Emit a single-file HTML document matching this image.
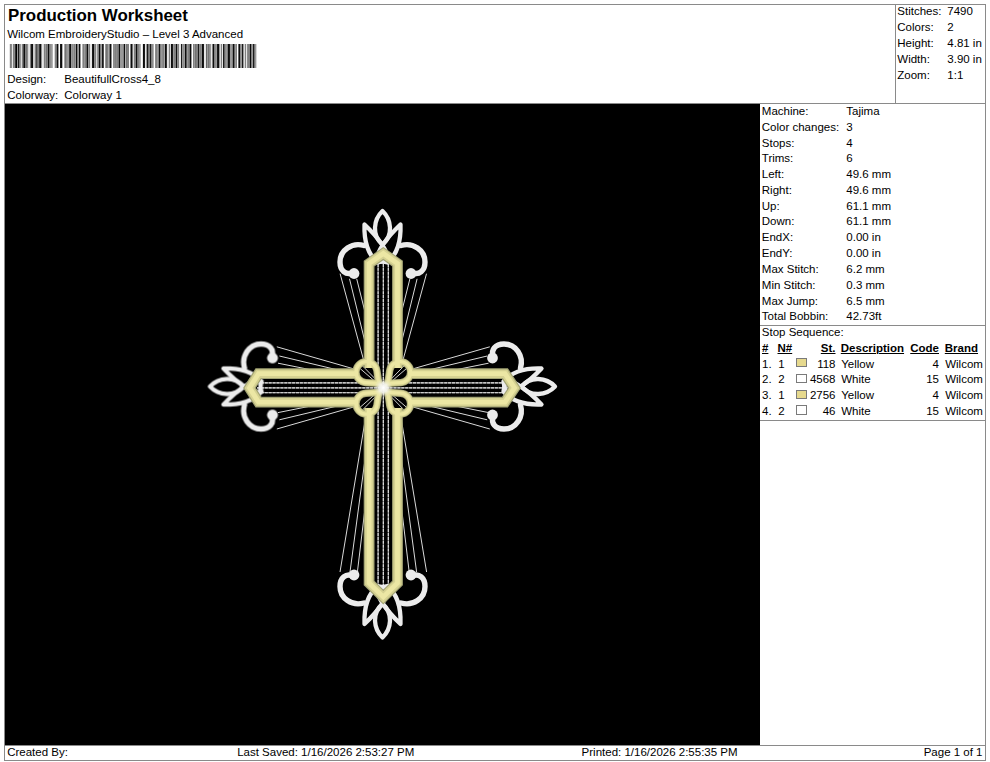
<!DOCTYPE html>
<html><head><meta charset="utf-8">
<style>
html,body{margin:0;padding:0;background:#fff;}
body{width:990px;height:762px;position:relative;overflow:hidden;font-family:"Liberation Sans",sans-serif;color:#000;}
.t{position:absolute;white-space:pre;}
.ln{position:absolute;}
.r{text-align:right;}
.u{text-decoration:underline;font-weight:bold;}
</style></head><body>
<div class="ln" style="left:4px;top:4px;width:982px;height:1px;background:#8a8a8a"></div>
<div class="ln" style="left:4px;top:4px;width:1px;height:757px;background:#8a8a8a"></div>
<div class="ln" style="left:985px;top:4px;width:1px;height:757px;background:#8a8a8a"></div>
<div class="ln" style="left:4px;top:760px;width:982px;height:1px;background:#8a8a8a"></div>
<div class="ln" style="left:4px;top:103px;width:982px;height:1px;background:#8a8a8a"></div>
<div class="ln" style="left:895px;top:4px;width:1px;height:100px;background:#8a8a8a"></div>
<div class="ln" style="left:4px;top:745px;width:982px;height:1px;background:#8a8a8a"></div>
<div class="ln" style="left:760px;top:325px;width:226px;height:1px;background:#8a8a8a"></div>
<div class="ln" style="left:760px;top:420px;width:226px;height:1px;background:#8a8a8a"></div>
<div class="t" style="left:8.00px;top:8.00px;font-size:16.9px;line-height:16.9px;font-weight:bold;">Production Worksheet</div>
<div class="t" style="left:7.20px;top:29.00px;font-size:11.5px;line-height:11.5px;">Wilcom EmbroideryStudio – Level 3 Advanced</div>
<div class="t" style="left:7.20px;top:74.00px;font-size:11.5px;line-height:11.5px;">Design:</div>
<div class="t" style="left:64.30px;top:74.00px;font-size:11.5px;line-height:11.5px;">BeautifullCross4_8</div>
<div class="t" style="left:7.20px;top:90.00px;font-size:11.5px;line-height:11.5px;">Colorway:</div>
<div class="t" style="left:64.30px;top:90.00px;font-size:11.5px;line-height:11.5px;">Colorway 1</div>
<div class="t" style="left:897.30px;top:6.00px;font-size:11.5px;line-height:11.5px;">Stitches:</div>
<div class="t" style="left:947.30px;top:6.00px;font-size:11.5px;line-height:11.5px;">7490</div>
<div class="t" style="left:897.30px;top:22.00px;font-size:11.5px;line-height:11.5px;">Colors:</div>
<div class="t" style="left:947.30px;top:22.00px;font-size:11.5px;line-height:11.5px;">2</div>
<div class="t" style="left:897.30px;top:38.00px;font-size:11.5px;line-height:11.5px;">Height:</div>
<div class="t" style="left:947.30px;top:38.00px;font-size:11.5px;line-height:11.5px;">4.81 in</div>
<div class="t" style="left:897.30px;top:54.00px;font-size:11.5px;line-height:11.5px;">Width:</div>
<div class="t" style="left:947.30px;top:54.00px;font-size:11.5px;line-height:11.5px;">3.90 in</div>
<div class="t" style="left:897.30px;top:70.00px;font-size:11.5px;line-height:11.5px;">Zoom:</div>
<div class="t" style="left:947.30px;top:70.00px;font-size:11.5px;line-height:11.5px;">1:1</div>
<svg style="position:absolute;left:0;top:0" width="990" height="110" viewBox="0 0 990 110" shape-rendering="crispEdges"><rect x="9" y="44" width="1" height="23.5" fill="rgb(230,230,230)"/><rect x="10" y="44" width="1" height="23.5" fill="rgb(128,128,128)"/><rect x="11" y="44" width="1" height="23.5" fill="rgb(140,140,140)"/><rect x="12" y="44" width="1" height="23.5" fill="rgb(230,230,230)"/><rect x="13" y="44" width="1" height="23.5" fill="rgb(128,128,128)"/><rect x="14" y="44" width="1" height="23.5" fill="rgb(140,140,140)"/><rect x="15" y="44" width="1" height="23.5" fill="rgb(51,51,51)"/><rect x="16" y="44" width="1" height="23.5" fill="rgb(0,0,0)"/><rect x="17" y="44" width="1" height="23.5" fill="rgb(153,153,153)"/><rect x="18" y="44" width="1" height="23.5" fill="rgb(26,26,26)"/><rect x="19" y="44" width="1" height="23.5" fill="rgb(128,128,128)"/><rect x="20" y="44" width="1" height="23.5" fill="rgb(153,153,153)"/><rect x="21" y="44" width="1" height="23.5" fill="rgb(217,217,217)"/><rect x="22" y="44" width="1" height="23.5" fill="rgb(128,128,128)"/><rect x="23" y="44" width="1" height="23.5" fill="rgb(76,76,76)"/><rect x="24" y="44" width="1" height="23.5" fill="rgb(13,13,13)"/><rect x="25" y="44" width="1" height="23.5" fill="rgb(128,128,128)"/><rect x="26" y="44" width="1" height="23.5" fill="rgb(115,115,115)"/><rect x="27" y="44" width="1" height="23.5" fill="rgb(140,140,140)"/><rect x="28" y="44" width="1" height="23.5" fill="rgb(217,217,217)"/><rect x="29" y="44" width="1" height="23.5" fill="rgb(230,230,230)"/><rect x="30" y="44" width="1" height="23.5" fill="rgb(128,128,128)"/><rect x="31" y="44" width="1" height="23.5" fill="rgb(26,26,26)"/><rect x="32" y="44" width="1" height="23.5" fill="rgb(13,13,13)"/><rect x="33" y="44" width="1" height="23.5" fill="rgb(204,204,204)"/><rect x="34" y="44" width="1" height="23.5" fill="rgb(204,204,204)"/><rect x="35" y="44" width="1" height="23.5" fill="rgb(128,128,128)"/><rect x="36" y="44" width="1" height="23.5" fill="rgb(76,76,76)"/><rect x="37" y="44" width="1" height="23.5" fill="rgb(115,115,115)"/><rect x="38" y="44" width="1" height="23.5" fill="rgb(128,128,128)"/><rect x="39" y="44" width="1" height="23.5" fill="rgb(51,51,51)"/><rect x="40" y="44" width="1" height="23.5" fill="rgb(13,13,13)"/><rect x="41" y="44" width="1" height="23.5" fill="rgb(140,140,140)"/><rect x="42" y="44" width="1" height="23.5" fill="rgb(230,230,230)"/><rect x="43" y="44" width="1" height="23.5" fill="rgb(217,217,217)"/><rect x="44" y="44" width="1" height="23.5" fill="rgb(128,128,128)"/><rect x="45" y="44" width="1" height="23.5" fill="rgb(153,153,153)"/><rect x="46" y="44" width="1" height="23.5" fill="rgb(115,115,115)"/><rect x="47" y="44" width="1" height="23.5" fill="rgb(128,128,128)"/><rect x="48" y="44" width="1" height="23.5" fill="rgb(13,13,13)"/><rect x="49" y="44" width="1" height="23.5" fill="rgb(115,115,115)"/><rect x="50" y="44" width="1" height="23.5" fill="rgb(140,140,140)"/><rect x="51" y="44" width="1" height="23.5" fill="rgb(153,153,153)"/><rect x="52" y="44" width="1" height="23.5" fill="rgb(178,178,178)"/><rect x="54" y="44" width="1" height="23.5" fill="rgb(217,217,217)"/><rect x="55" y="44" width="1" height="23.5" fill="rgb(128,128,128)"/><rect x="56" y="44" width="1" height="23.5" fill="rgb(115,115,115)"/><rect x="57" y="44" width="1" height="23.5" fill="rgb(13,13,13)"/><rect x="58" y="44" width="1" height="23.5" fill="rgb(153,153,153)"/><rect x="60" y="44" width="1" height="23.5" fill="rgb(26,26,26)"/><rect x="61" y="44" width="1" height="23.5" fill="rgb(13,13,13)"/><rect x="62" y="44" width="1" height="23.5" fill="rgb(178,178,178)"/><rect x="64" y="44" width="1" height="23.5" fill="rgb(166,166,166)"/><rect x="65" y="44" width="1" height="23.5" fill="rgb(115,115,115)"/><rect x="66" y="44" width="1" height="23.5" fill="rgb(140,140,140)"/><rect x="67" y="44" width="1" height="23.5" fill="rgb(153,153,153)"/><rect x="68" y="44" width="1" height="23.5" fill="rgb(153,153,153)"/><rect x="69" y="44" width="1" height="23.5" fill="rgb(51,51,51)"/><rect x="70" y="44" width="1" height="23.5" fill="rgb(13,13,13)"/><rect x="71" y="44" width="1" height="23.5" fill="rgb(153,153,153)"/><rect x="72" y="44" width="1" height="23.5" fill="rgb(140,140,140)"/><rect x="73" y="44" width="1" height="23.5" fill="rgb(153,153,153)"/><rect x="74" y="44" width="1" height="23.5" fill="rgb(128,128,128)"/><rect x="75" y="44" width="1" height="23.5" fill="rgb(153,153,153)"/><rect x="76" y="44" width="1" height="23.5" fill="rgb(13,13,13)"/><rect x="77" y="44" width="1" height="23.5" fill="rgb(128,128,128)"/><rect x="78" y="44" width="1" height="23.5" fill="rgb(153,153,153)"/><rect x="79" y="44" width="1" height="23.5" fill="rgb(13,13,13)"/><rect x="80" y="44" width="1" height="23.5" fill="rgb(153,153,153)"/><rect x="82" y="44" width="1" height="23.5" fill="rgb(178,178,178)"/><rect x="83" y="44" width="1" height="23.5" fill="rgb(128,128,128)"/><rect x="84" y="44" width="1" height="23.5" fill="rgb(153,153,153)"/><rect x="85" y="44" width="1" height="23.5" fill="rgb(128,128,128)"/><rect x="86" y="44" width="1" height="23.5" fill="rgb(102,102,102)"/><rect x="87" y="44" width="1" height="23.5" fill="rgb(13,13,13)"/><rect x="88" y="44" width="1" height="23.5" fill="rgb(153,153,153)"/><rect x="89" y="44" width="1" height="23.5" fill="rgb(128,128,128)"/><rect x="90" y="44" width="1" height="23.5" fill="rgb(230,230,230)"/><rect x="91" y="44" width="1" height="23.5" fill="rgb(230,230,230)"/><rect x="92" y="44" width="1" height="23.5" fill="rgb(26,26,26)"/><rect x="93" y="44" width="1" height="23.5" fill="rgb(13,13,13)"/><rect x="94" y="44" width="1" height="23.5" fill="rgb(140,140,140)"/><rect x="95" y="44" width="1" height="23.5" fill="rgb(128,128,128)"/><rect x="96" y="44" width="1" height="23.5" fill="rgb(217,217,217)"/><rect x="97" y="44" width="1" height="23.5" fill="rgb(153,153,153)"/><rect x="98" y="44" width="1" height="23.5" fill="rgb(128,128,128)"/><rect x="99" y="44" width="1" height="23.5" fill="rgb(13,13,13)"/><rect x="100" y="44" width="1" height="23.5" fill="rgb(128,128,128)"/><rect x="101" y="44" width="1" height="23.5" fill="rgb(153,153,153)"/><rect x="102" y="44" width="1" height="23.5" fill="rgb(26,26,26)"/><rect x="103" y="44" width="1" height="23.5" fill="rgb(76,76,76)"/><rect x="105" y="44" width="1" height="23.5" fill="rgb(153,153,153)"/><rect x="106" y="44" width="1" height="23.5" fill="rgb(115,115,115)"/><rect x="107" y="44" width="1" height="23.5" fill="rgb(128,128,128)"/><rect x="108" y="44" width="1" height="23.5" fill="rgb(166,166,166)"/><rect x="109" y="44" width="1" height="23.5" fill="rgb(115,115,115)"/><rect x="110" y="44" width="1" height="23.5" fill="rgb(13,13,13)"/><rect x="111" y="44" width="1" height="23.5" fill="rgb(140,140,140)"/><rect x="113" y="44" width="1" height="23.5" fill="rgb(140,140,140)"/><rect x="114" y="44" width="1" height="23.5" fill="rgb(140,140,140)"/><rect x="115" y="44" width="1" height="23.5" fill="rgb(128,128,128)"/><rect x="116" y="44" width="1" height="23.5" fill="rgb(140,140,140)"/><rect x="117" y="44" width="1" height="23.5" fill="rgb(128,128,128)"/><rect x="118" y="44" width="1" height="23.5" fill="rgb(115,115,115)"/><rect x="119" y="44" width="1" height="23.5" fill="rgb(13,13,13)"/><rect x="120" y="44" width="1" height="23.5" fill="rgb(153,153,153)"/><rect x="121" y="44" width="1" height="23.5" fill="rgb(153,153,153)"/><rect x="122" y="44" width="1" height="23.5" fill="rgb(153,153,153)"/><rect x="123" y="44" width="1" height="23.5" fill="rgb(128,128,128)"/><rect x="124" y="44" width="1" height="23.5" fill="rgb(13,13,13)"/><rect x="125" y="44" width="1" height="23.5" fill="rgb(178,178,178)"/><rect x="126" y="44" width="1" height="23.5" fill="rgb(115,115,115)"/><rect x="127" y="44" width="1" height="23.5" fill="rgb(128,128,128)"/><rect x="128" y="44" width="1" height="23.5" fill="rgb(128,128,128)"/><rect x="130" y="44" width="1" height="23.5" fill="rgb(128,128,128)"/><rect x="131" y="44" width="1" height="23.5" fill="rgb(13,13,13)"/><rect x="132" y="44" width="1" height="23.5" fill="rgb(115,115,115)"/><rect x="133" y="44" width="1" height="23.5" fill="rgb(217,217,217)"/><rect x="134" y="44" width="1" height="23.5" fill="rgb(128,128,128)"/><rect x="135" y="44" width="1" height="23.5" fill="rgb(128,128,128)"/><rect x="136" y="44" width="1" height="23.5" fill="rgb(13,13,13)"/><rect x="137" y="44" width="1" height="23.5" fill="rgb(115,115,115)"/><rect x="138" y="44" width="1" height="23.5" fill="rgb(128,128,128)"/><rect x="139" y="44" width="1" height="23.5" fill="rgb(153,153,153)"/><rect x="140" y="44" width="1" height="23.5" fill="rgb(178,178,178)"/><rect x="142" y="44" width="1" height="23.5" fill="rgb(230,230,230)"/><rect x="143" y="44" width="1" height="23.5" fill="rgb(13,13,13)"/><rect x="144" y="44" width="1" height="23.5" fill="rgb(26,26,26)"/><rect x="145" y="44" width="1" height="23.5" fill="rgb(230,230,230)"/><rect x="146" y="44" width="1" height="23.5" fill="rgb(153,153,153)"/><rect x="147" y="44" width="1" height="23.5" fill="rgb(26,26,26)"/><rect x="148" y="44" width="1" height="23.5" fill="rgb(115,115,115)"/><rect x="149" y="44" width="1" height="23.5" fill="rgb(128,128,128)"/><rect x="150" y="44" width="1" height="23.5" fill="rgb(26,26,26)"/><rect x="151" y="44" width="1" height="23.5" fill="rgb(128,128,128)"/><rect x="152" y="44" width="1" height="23.5" fill="rgb(140,140,140)"/><rect x="153" y="44" width="1" height="23.5" fill="rgb(178,178,178)"/><rect x="155" y="44" width="1" height="23.5" fill="rgb(140,140,140)"/><rect x="156" y="44" width="1" height="23.5" fill="rgb(128,128,128)"/><rect x="157" y="44" width="1" height="23.5" fill="rgb(153,153,153)"/><rect x="158" y="44" width="1" height="23.5" fill="rgb(128,128,128)"/><rect x="159" y="44" width="1" height="23.5" fill="rgb(13,13,13)"/><rect x="160" y="44" width="1" height="23.5" fill="rgb(128,128,128)"/><rect x="161" y="44" width="1" height="23.5" fill="rgb(153,153,153)"/><rect x="162" y="44" width="1" height="23.5" fill="rgb(140,140,140)"/><rect x="163" y="44" width="1" height="23.5" fill="rgb(128,128,128)"/><rect x="164" y="44" width="1" height="23.5" fill="rgb(166,166,166)"/><rect x="165" y="44" width="1" height="23.5" fill="rgb(13,13,13)"/><rect x="166" y="44" width="1" height="23.5" fill="rgb(51,51,51)"/><rect x="167" y="44" width="1" height="23.5" fill="rgb(230,230,230)"/><rect x="168" y="44" width="1" height="23.5" fill="rgb(217,217,217)"/><rect x="169" y="44" width="1" height="23.5" fill="rgb(128,128,128)"/><rect x="170" y="44" width="1" height="23.5" fill="rgb(217,217,217)"/><rect x="171" y="44" width="1" height="23.5" fill="rgb(13,13,13)"/><rect x="172" y="44" width="1" height="23.5" fill="rgb(26,26,26)"/><rect x="173" y="44" width="1" height="23.5" fill="rgb(153,153,153)"/><rect x="174" y="44" width="1" height="23.5" fill="rgb(128,128,128)"/><rect x="175" y="44" width="1" height="23.5" fill="rgb(128,128,128)"/><rect x="176" y="44" width="1" height="23.5" fill="rgb(13,13,13)"/><rect x="177" y="44" width="1" height="23.5" fill="rgb(140,140,140)"/><rect x="178" y="44" width="1" height="23.5" fill="rgb(128,128,128)"/><rect x="179" y="44" width="1" height="23.5" fill="rgb(230,230,230)"/><rect x="180" y="44" width="1" height="23.5" fill="rgb(230,230,230)"/><rect x="181" y="44" width="1" height="23.5" fill="rgb(26,26,26)"/><rect x="182" y="44" width="1" height="23.5" fill="rgb(153,153,153)"/><rect x="183" y="44" width="1" height="23.5" fill="rgb(140,140,140)"/><rect x="184" y="44" width="1" height="23.5" fill="rgb(153,153,153)"/><rect x="185" y="44" width="1" height="23.5" fill="rgb(13,13,13)"/><rect x="186" y="44" width="1" height="23.5" fill="rgb(89,89,89)"/><rect x="187" y="44" width="1" height="23.5" fill="rgb(153,153,153)"/><rect x="188" y="44" width="1" height="23.5" fill="rgb(128,128,128)"/><rect x="189" y="44" width="1" height="23.5" fill="rgb(115,115,115)"/><rect x="190" y="44" width="1" height="23.5" fill="rgb(13,13,13)"/><rect x="191" y="44" width="1" height="23.5" fill="rgb(153,153,153)"/><rect x="193" y="44" width="1" height="23.5" fill="rgb(128,128,128)"/><rect x="194" y="44" width="1" height="23.5" fill="rgb(153,153,153)"/><rect x="195" y="44" width="1" height="23.5" fill="rgb(115,115,115)"/><rect x="196" y="44" width="1" height="23.5" fill="rgb(128,128,128)"/><rect x="197" y="44" width="1" height="23.5" fill="rgb(128,128,128)"/><rect x="198" y="44" width="1" height="23.5" fill="rgb(26,26,26)"/><rect x="199" y="44" width="1" height="23.5" fill="rgb(140,140,140)"/><rect x="200" y="44" width="1" height="23.5" fill="rgb(128,128,128)"/><rect x="201" y="44" width="1" height="23.5" fill="rgb(140,140,140)"/><rect x="202" y="44" width="1" height="23.5" fill="rgb(13,13,13)"/><rect x="203" y="44" width="1" height="23.5" fill="rgb(26,26,26)"/><rect x="204" y="44" width="1" height="23.5" fill="rgb(230,230,230)"/><rect x="205" y="44" width="1" height="23.5" fill="rgb(230,230,230)"/><rect x="206" y="44" width="1" height="23.5" fill="rgb(102,102,102)"/><rect x="207" y="44" width="1" height="23.5" fill="rgb(153,153,153)"/><rect x="208" y="44" width="1" height="23.5" fill="rgb(115,115,115)"/><rect x="209" y="44" width="1" height="23.5" fill="rgb(140,140,140)"/><rect x="210" y="44" width="1" height="23.5" fill="rgb(153,153,153)"/><rect x="211" y="44" width="1" height="23.5" fill="rgb(230,230,230)"/><rect x="212" y="44" width="1" height="23.5" fill="rgb(128,128,128)"/><rect x="213" y="44" width="1" height="23.5" fill="rgb(13,13,13)"/><rect x="214" y="44" width="1" height="23.5" fill="rgb(128,128,128)"/><rect x="215" y="44" width="1" height="23.5" fill="rgb(140,140,140)"/><rect x="216" y="44" width="1" height="23.5" fill="rgb(153,153,153)"/><rect x="217" y="44" width="1" height="23.5" fill="rgb(26,26,26)"/><rect x="218" y="44" width="1" height="23.5" fill="rgb(13,13,13)"/><rect x="219" y="44" width="1" height="23.5" fill="rgb(153,153,153)"/><rect x="220" y="44" width="1" height="23.5" fill="rgb(217,217,217)"/><rect x="221" y="44" width="1" height="23.5" fill="rgb(128,128,128)"/><rect x="222" y="44" width="1" height="23.5" fill="rgb(230,230,230)"/><rect x="223" y="44" width="1" height="23.5" fill="rgb(26,26,26)"/><rect x="224" y="44" width="1" height="23.5" fill="rgb(102,102,102)"/><rect x="225" y="44" width="1" height="23.5" fill="rgb(140,140,140)"/><rect x="226" y="44" width="1" height="23.5" fill="rgb(153,153,153)"/><rect x="227" y="44" width="1" height="23.5" fill="rgb(128,128,128)"/><rect x="228" y="44" width="1" height="23.5" fill="rgb(13,13,13)"/><rect x="229" y="44" width="1" height="23.5" fill="rgb(26,26,26)"/><rect x="230" y="44" width="1" height="23.5" fill="rgb(153,153,153)"/><rect x="231" y="44" width="1" height="23.5" fill="rgb(153,153,153)"/><rect x="232" y="44" width="1" height="23.5" fill="rgb(128,128,128)"/><rect x="233" y="44" width="1" height="23.5" fill="rgb(13,13,13)"/><rect x="234" y="44" width="1" height="23.5" fill="rgb(102,102,102)"/><rect x="235" y="44" width="1" height="23.5" fill="rgb(153,153,153)"/><rect x="236" y="44" width="1" height="23.5" fill="rgb(128,128,128)"/><rect x="238" y="44" width="1" height="23.5" fill="rgb(102,102,102)"/><rect x="239" y="44" width="1" height="23.5" fill="rgb(13,13,13)"/><rect x="240" y="44" width="1" height="23.5" fill="rgb(140,140,140)"/><rect x="241" y="44" width="1" height="23.5" fill="rgb(153,153,153)"/><rect x="242" y="44" width="1" height="23.5" fill="rgb(26,26,26)"/><rect x="243" y="44" width="1" height="23.5" fill="rgb(153,153,153)"/><rect x="244" y="44" width="1" height="23.5" fill="rgb(217,217,217)"/><rect x="245" y="44" width="1" height="23.5" fill="rgb(128,128,128)"/><rect x="246" y="44" width="1" height="23.5" fill="rgb(230,230,230)"/><rect x="247" y="44" width="1" height="23.5" fill="rgb(140,140,140)"/><rect x="248" y="44" width="1" height="23.5" fill="rgb(128,128,128)"/><rect x="249" y="44" width="1" height="23.5" fill="rgb(128,128,128)"/><rect x="250" y="44" width="1" height="23.5" fill="rgb(13,13,13)"/><rect x="251" y="44" width="1" height="23.5" fill="rgb(128,128,128)"/><rect x="252" y="44" width="1" height="23.5" fill="rgb(153,153,153)"/><rect x="253" y="44" width="1" height="23.5" fill="rgb(26,26,26)"/><rect x="254" y="44" width="1" height="23.5" fill="rgb(115,115,115)"/><rect x="255" y="44" width="1" height="23.5" fill="rgb(153,153,153)"/><rect x="256" y="44" width="1" height="23.5" fill="rgb(217,217,217)"/></svg>
<div style="position:absolute;left:5px;top:104px;width:755px;height:641px;background:#000;"></div>
<svg style="position:absolute;left:0;top:0" width="990" height="762" viewBox="0 0 990 762">
<defs><radialGradient id="glow"><stop offset="0" stop-color="#fff" stop-opacity="1"/><stop offset="0.45" stop-color="#f4f4ee" stop-opacity="0.9"/><stop offset="1" stop-color="#e8e6c0" stop-opacity="0"/></radialGradient><filter id="soft" x="-5%" y="-5%" width="110%" height="110%"><feGaussianBlur stdDeviation="0.6"/></filter></defs>
<g filter="url(#soft)">
<line x1="340.1" y1="273.7" x2="365.5" y2="367.0" stroke="#d9d9d9" stroke-width="1.0" />
<line x1="426.5" y1="273.7" x2="401.1" y2="367.0" stroke="#d9d9d9" stroke-width="1.0" />
<line x1="349.5" y1="278.8" x2="366.0" y2="346.0" stroke="#d9d9d9" stroke-width="1.0" />
<line x1="417.1" y1="278.8" x2="400.6" y2="346.0" stroke="#d9d9d9" stroke-width="1.0" />
<line x1="356.7" y1="278.8" x2="366.0" y2="316.0" stroke="#d9d9d9" stroke-width="1.0" />
<line x1="409.9" y1="278.8" x2="400.6" y2="316.0" stroke="#d9d9d9" stroke-width="1.0" />
<line x1="340.0" y1="572.0" x2="365.5" y2="418.0" stroke="#d9d9d9" stroke-width="1.0" />
<line x1="426.6" y1="572.0" x2="401.1" y2="418.0" stroke="#d9d9d9" stroke-width="1.0" />
<line x1="350.0" y1="572.0" x2="366.0" y2="452.0" stroke="#d9d9d9" stroke-width="1.0" />
<line x1="416.6" y1="572.0" x2="400.6" y2="452.0" stroke="#d9d9d9" stroke-width="1.0" />
<line x1="357.4" y1="572.0" x2="366.0" y2="500.0" stroke="#d9d9d9" stroke-width="1.0" />
<line x1="409.2" y1="572.0" x2="400.6" y2="500.0" stroke="#d9d9d9" stroke-width="1.0" />
<line x1="276.8" y1="346.8" x2="356.0" y2="369.5" stroke="#d9d9d9" stroke-width="1.0" />
<line x1="276.8" y1="429.0" x2="356.0" y2="406.3" stroke="#d9d9d9" stroke-width="1.0" />
<line x1="489.8" y1="346.8" x2="410.6" y2="369.5" stroke="#d9d9d9" stroke-width="1.0" />
<line x1="489.8" y1="429.0" x2="410.6" y2="406.3" stroke="#d9d9d9" stroke-width="1.0" />
<line x1="279.4" y1="356.0" x2="338.0" y2="370.0" stroke="#d9d9d9" stroke-width="1.0" />
<line x1="279.4" y1="419.8" x2="338.0" y2="405.8" stroke="#d9d9d9" stroke-width="1.0" />
<line x1="487.2" y1="356.0" x2="428.6" y2="370.0" stroke="#d9d9d9" stroke-width="1.0" />
<line x1="487.2" y1="419.8" x2="428.6" y2="405.8" stroke="#d9d9d9" stroke-width="1.0" />
<line x1="278.0" y1="363.2" x2="312.0" y2="370.0" stroke="#d9d9d9" stroke-width="1.0" />
<line x1="278.0" y1="412.6" x2="312.0" y2="405.8" stroke="#d9d9d9" stroke-width="1.0" />
<line x1="488.6" y1="363.2" x2="454.6" y2="370.0" stroke="#d9d9d9" stroke-width="1.0" />
<line x1="488.6" y1="412.6" x2="454.6" y2="405.8" stroke="#d9d9d9" stroke-width="1.0" />
<line x1="378.1" y1="260.0" x2="378.1" y2="590.0" stroke="#a0a0a0" stroke-width="0.9" />
<line x1="378.1" y1="260.0" x2="378.1" y2="590.0" stroke="#e8e8e8" stroke-width="1.1" stroke-dasharray="3 0.9"/>
<line x1="383.3" y1="260.0" x2="383.3" y2="590.0" stroke="#a0a0a0" stroke-width="0.9" />
<line x1="383.3" y1="260.0" x2="383.3" y2="590.0" stroke="#e8e8e8" stroke-width="1.1" stroke-dasharray="3 0.9"/>
<line x1="388.3" y1="260.0" x2="388.3" y2="590.0" stroke="#a0a0a0" stroke-width="0.9" />
<line x1="388.3" y1="260.0" x2="388.3" y2="590.0" stroke="#e8e8e8" stroke-width="1.1" stroke-dasharray="3 0.9"/>
<line x1="257.0" y1="382.9" x2="508.0" y2="382.9" stroke="#a0a0a0" stroke-width="0.9" />
<line x1="257.0" y1="382.9" x2="508.0" y2="382.9" stroke="#e8e8e8" stroke-width="1.1" stroke-dasharray="3 0.9"/>
<line x1="257.0" y1="387.9" x2="508.0" y2="387.9" stroke="#a0a0a0" stroke-width="0.9" />
<line x1="257.0" y1="387.9" x2="508.0" y2="387.9" stroke="#e8e8e8" stroke-width="1.1" stroke-dasharray="3 0.9"/>
<line x1="257.0" y1="392.7" x2="508.0" y2="392.7" stroke="#a0a0a0" stroke-width="0.9" />
<line x1="257.0" y1="392.7" x2="508.0" y2="392.7" stroke="#e8e8e8" stroke-width="1.1" stroke-dasharray="3 0.9"/>
<line x1="362.7" y1="366.0" x2="383.0" y2="386.8" stroke="#d0d0d0" stroke-width="1.0" />
<line x1="360.2" y1="368.6" x2="382.2" y2="387.6" stroke="#d0d0d0" stroke-width="1.0" />
<line x1="360.2" y1="407.2" x2="382.2" y2="388.2" stroke="#d0d0d0" stroke-width="1.0" />
<line x1="362.7" y1="409.8" x2="383.0" y2="389.0" stroke="#d0d0d0" stroke-width="1.0" />
<line x1="406.4" y1="368.6" x2="384.4" y2="387.6" stroke="#d0d0d0" stroke-width="1.0" />
<line x1="403.9" y1="366.0" x2="383.6" y2="386.8" stroke="#d0d0d0" stroke-width="1.0" />
<line x1="403.9" y1="409.8" x2="383.6" y2="389.0" stroke="#d0d0d0" stroke-width="1.0" />
<line x1="406.4" y1="407.2" x2="384.4" y2="388.2" stroke="#d0d0d0" stroke-width="1.0" />
<g transform="translate(382.5,208.5)"><path d="M0,2.5 C-9,11 -11,27 0,36 C11,27 9,11 0,2.5 Z" fill="none" stroke="#ececec" stroke-width="4.3" stroke-linejoin="round"/><path d="M-18,16 Q-19,42 -5,54 L6,52 Q5,38 -18,16 Z" fill="none" stroke="#ececec" stroke-width="4.3" stroke-linejoin="round"/><path d="M18,16 Q19,42 5,54 L-6,52 Q-5,38 18,16 Z" fill="none" stroke="#ececec" stroke-width="4.3" stroke-linejoin="round"/><path d="M-18.5,37 C-30.5,33.5 -42.5,41.5 -42.5,53.5 C-42.5,62.5 -36.5,66.5 -30.5,64.5" fill="none" stroke="#ececec" stroke-width="5.4" stroke-linecap="round"/><path d="M18.5,37 C30.5,33.5 42.5,41.5 42.5,53.5 C42.5,62.5 36.5,66.5 30.5,64.5" fill="none" stroke="#ececec" stroke-width="5.4" stroke-linecap="round"/><circle cx="-28.5" cy="65" r="5.4" fill="#ececec"/><circle cx="28.5" cy="65" r="5.4" fill="#ececec"/></g>
<g transform="translate(382.5,640) scale(1,-1)"><path d="M0,2.5 C-9,11 -11,27 0,36 C11,27 9,11 0,2.5 Z" fill="none" stroke="#ececec" stroke-width="4.3" stroke-linejoin="round"/><path d="M-18,16 Q-19,42 -5,54 L6,52 Q5,38 -18,16 Z" fill="none" stroke="#ececec" stroke-width="4.3" stroke-linejoin="round"/><path d="M18,16 Q19,42 5,54 L-6,52 Q-5,38 18,16 Z" fill="none" stroke="#ececec" stroke-width="4.3" stroke-linejoin="round"/><path d="M-18.5,37 C-30.5,33.5 -42.5,41.5 -42.5,53.5 C-42.5,62.5 -36.5,66.5 -30.5,64.5" fill="none" stroke="#ececec" stroke-width="5.4" stroke-linecap="round"/><path d="M18.5,37 C30.5,33.5 42.5,41.5 42.5,53.5 C42.5,62.5 36.5,66.5 30.5,64.5" fill="none" stroke="#ececec" stroke-width="5.4" stroke-linecap="round"/><circle cx="-28.5" cy="65" r="5.4" fill="#ececec"/><circle cx="28.5" cy="65" r="5.4" fill="#ececec"/></g>
<g transform="translate(207.5,386.5) rotate(-90)"><path d="M0,2.5 C-9,11 -11,27 0,36 C11,27 9,11 0,2.5 Z" fill="none" stroke="#ececec" stroke-width="4.3" stroke-linejoin="round"/><path d="M-18,16 Q-19,42 -5,54 L6,52 Q5,38 -18,16 Z" fill="none" stroke="#ececec" stroke-width="4.3" stroke-linejoin="round"/><path d="M18,16 Q19,42 5,54 L-6,52 Q-5,38 18,16 Z" fill="none" stroke="#ececec" stroke-width="4.3" stroke-linejoin="round"/><path d="M-18.5,37 C-30.5,33.5 -42.5,41.5 -42.5,53.5 C-42.5,62.5 -36.5,66.5 -30.5,64.5" fill="none" stroke="#ececec" stroke-width="5.4" stroke-linecap="round"/><path d="M18.5,37 C30.5,33.5 42.5,41.5 42.5,53.5 C42.5,62.5 36.5,66.5 30.5,64.5" fill="none" stroke="#ececec" stroke-width="5.4" stroke-linecap="round"/><circle cx="-28.5" cy="65" r="5.4" fill="#ececec"/><circle cx="28.5" cy="65" r="5.4" fill="#ececec"/></g>
<g transform="translate(557.5,386.5) rotate(90)"><path d="M0,2.5 C-9,11 -11,27 0,36 C11,27 9,11 0,2.5 Z" fill="none" stroke="#ececec" stroke-width="4.3" stroke-linejoin="round"/><path d="M-18,16 Q-19,42 -5,54 L6,52 Q5,38 -18,16 Z" fill="none" stroke="#ececec" stroke-width="4.3" stroke-linejoin="round"/><path d="M18,16 Q19,42 5,54 L-6,52 Q-5,38 18,16 Z" fill="none" stroke="#ececec" stroke-width="4.3" stroke-linejoin="round"/><path d="M-18.5,37 C-30.5,33.5 -42.5,41.5 -42.5,53.5 C-42.5,62.5 -36.5,66.5 -30.5,64.5" fill="none" stroke="#ececec" stroke-width="5.4" stroke-linecap="round"/><path d="M18.5,37 C30.5,33.5 42.5,41.5 42.5,53.5 C42.5,62.5 36.5,66.5 30.5,64.5" fill="none" stroke="#ececec" stroke-width="5.4" stroke-linecap="round"/><circle cx="-28.5" cy="65" r="5.4" fill="#ececec"/><circle cx="28.5" cy="65" r="5.4" fill="#ececec"/></g>
<path d="M369.1,368 L369.1,263.5 L383.3,253.5 L397.5,263.5 L397.5,368" fill="none" stroke="#a3a474" stroke-width="10.8" stroke-linejoin="miter" stroke-miterlimit="10"/>
<path d="M369.1,408 L369.1,583 L383.3,597 L397.5,583 L397.5,408" fill="none" stroke="#a3a474" stroke-width="10.8" stroke-linejoin="miter" stroke-miterlimit="10"/>
<path d="M358,373.7 L258.5,373.7 L249.5,387.9 L258.5,402.1 L358,402.1" fill="none" stroke="#a3a474" stroke-width="10.8" stroke-linejoin="miter" stroke-miterlimit="10"/>
<path d="M408,373.7 L505,373.7 L514.5,387.9 L505,402.1 L408,402.1" fill="none" stroke="#a3a474" stroke-width="10.8" stroke-linejoin="miter" stroke-miterlimit="10"/>
<path d="M378.80,383.40 L376.89,370.55 A10.5,10.5 0 1 0 365.84,382.58 Z" fill="none" stroke="#a3a474" stroke-width="7.344000000000001" stroke-linejoin="miter" stroke-miterlimit="10"/>
<path d="M378.80,392.40 L365.84,393.22 A10.5,10.5 0 1 0 376.89,405.25 Z" fill="none" stroke="#a3a474" stroke-width="7.344000000000001" stroke-linejoin="miter" stroke-miterlimit="10"/>
<path d="M387.80,383.40 L400.76,382.58 A10.5,10.5 0 1 0 389.71,370.55 Z" fill="none" stroke="#a3a474" stroke-width="7.344000000000001" stroke-linejoin="miter" stroke-miterlimit="10"/>
<path d="M387.80,392.40 L389.71,405.25 A10.5,10.5 0 1 0 400.76,393.22 Z" fill="none" stroke="#a3a474" stroke-width="7.344000000000001" stroke-linejoin="miter" stroke-miterlimit="10"/>
<path d="M369.1,368 L369.1,263.5 L383.3,253.5 L397.5,263.5 L397.5,368" fill="none" stroke="#d6d292" stroke-width="8.4" stroke-linejoin="miter" stroke-miterlimit="10"/>
<path d="M369.1,408 L369.1,583 L383.3,597 L397.5,583 L397.5,408" fill="none" stroke="#d6d292" stroke-width="8.4" stroke-linejoin="miter" stroke-miterlimit="10"/>
<path d="M358,373.7 L258.5,373.7 L249.5,387.9 L258.5,402.1 L358,402.1" fill="none" stroke="#d6d292" stroke-width="8.4" stroke-linejoin="miter" stroke-miterlimit="10"/>
<path d="M408,373.7 L505,373.7 L514.5,387.9 L505,402.1 L408,402.1" fill="none" stroke="#d6d292" stroke-width="8.4" stroke-linejoin="miter" stroke-miterlimit="10"/>
<path d="M378.80,383.40 L376.89,370.55 A10.5,10.5 0 1 0 365.84,382.58 Z" fill="none" stroke="#d6d292" stroke-width="5.712000000000001" stroke-linejoin="miter" stroke-miterlimit="10"/>
<path d="M378.80,392.40 L365.84,393.22 A10.5,10.5 0 1 0 376.89,405.25 Z" fill="none" stroke="#d6d292" stroke-width="5.712000000000001" stroke-linejoin="miter" stroke-miterlimit="10"/>
<path d="M387.80,383.40 L400.76,382.58 A10.5,10.5 0 1 0 389.71,370.55 Z" fill="none" stroke="#d6d292" stroke-width="5.712000000000001" stroke-linejoin="miter" stroke-miterlimit="10"/>
<path d="M387.80,392.40 L389.71,405.25 A10.5,10.5 0 1 0 400.76,393.22 Z" fill="none" stroke="#d6d292" stroke-width="5.712000000000001" stroke-linejoin="miter" stroke-miterlimit="10"/>
<path d="M369.1,368 L369.1,263.5 L383.3,253.5 L397.5,263.5 L397.5,368" fill="none" stroke="#ece7a4" stroke-width="4.8" stroke-linejoin="miter" stroke-miterlimit="10"/>
<path d="M369.1,408 L369.1,583 L383.3,597 L397.5,583 L397.5,408" fill="none" stroke="#ece7a4" stroke-width="4.8" stroke-linejoin="miter" stroke-miterlimit="10"/>
<path d="M358,373.7 L258.5,373.7 L249.5,387.9 L258.5,402.1 L358,402.1" fill="none" stroke="#ece7a4" stroke-width="4.8" stroke-linejoin="miter" stroke-miterlimit="10"/>
<path d="M408,373.7 L505,373.7 L514.5,387.9 L505,402.1 L408,402.1" fill="none" stroke="#ece7a4" stroke-width="4.8" stroke-linejoin="miter" stroke-miterlimit="10"/>
<path d="M378.80,383.40 L376.89,370.55 A10.5,10.5 0 1 0 365.84,382.58 Z" fill="none" stroke="#ece7a4" stroke-width="3.2640000000000002" stroke-linejoin="miter" stroke-miterlimit="10"/>
<path d="M378.80,392.40 L365.84,393.22 A10.5,10.5 0 1 0 376.89,405.25 Z" fill="none" stroke="#ece7a4" stroke-width="3.2640000000000002" stroke-linejoin="miter" stroke-miterlimit="10"/>
<path d="M387.80,383.40 L400.76,382.58 A10.5,10.5 0 1 0 389.71,370.55 Z" fill="none" stroke="#ece7a4" stroke-width="3.2640000000000002" stroke-linejoin="miter" stroke-miterlimit="10"/>
<path d="M387.80,392.40 L389.71,405.25 A10.5,10.5 0 1 0 400.76,393.22 Z" fill="none" stroke="#ece7a4" stroke-width="3.2640000000000002" stroke-linejoin="miter" stroke-miterlimit="10"/>
</g>
<circle cx="383.3" cy="387.9" r="9.5" fill="url(#glow)"/>
</svg>
<div class="t" style="left:761.80px;top:106.00px;font-size:11.5px;line-height:11.5px;">Machine:</div>
<div class="t" style="left:846.30px;top:106.00px;font-size:11.5px;line-height:11.5px;">Tajima</div>
<div class="t" style="left:761.80px;top:122.00px;font-size:11.5px;line-height:11.5px;">Color changes:</div>
<div class="t" style="left:846.30px;top:122.00px;font-size:11.5px;line-height:11.5px;">3</div>
<div class="t" style="left:761.80px;top:138.00px;font-size:11.5px;line-height:11.5px;">Stops:</div>
<div class="t" style="left:846.30px;top:138.00px;font-size:11.5px;line-height:11.5px;">4</div>
<div class="t" style="left:761.80px;top:153.00px;font-size:11.5px;line-height:11.5px;">Trims:</div>
<div class="t" style="left:846.30px;top:153.00px;font-size:11.5px;line-height:11.5px;">6</div>
<div class="t" style="left:761.80px;top:169.00px;font-size:11.5px;line-height:11.5px;">Left:</div>
<div class="t" style="left:846.30px;top:169.00px;font-size:11.5px;line-height:11.5px;">49.6 mm</div>
<div class="t" style="left:761.80px;top:185.00px;font-size:11.5px;line-height:11.5px;">Right:</div>
<div class="t" style="left:846.30px;top:185.00px;font-size:11.5px;line-height:11.5px;">49.6 mm</div>
<div class="t" style="left:761.80px;top:201.00px;font-size:11.5px;line-height:11.5px;">Up:</div>
<div class="t" style="left:846.30px;top:201.00px;font-size:11.5px;line-height:11.5px;">61.1 mm</div>
<div class="t" style="left:761.80px;top:216.00px;font-size:11.5px;line-height:11.5px;">Down:</div>
<div class="t" style="left:846.30px;top:216.00px;font-size:11.5px;line-height:11.5px;">61.1 mm</div>
<div class="t" style="left:761.80px;top:232.00px;font-size:11.5px;line-height:11.5px;">EndX:</div>
<div class="t" style="left:846.30px;top:232.00px;font-size:11.5px;line-height:11.5px;">0.00 in</div>
<div class="t" style="left:761.80px;top:248.00px;font-size:11.5px;line-height:11.5px;">EndY:</div>
<div class="t" style="left:846.30px;top:248.00px;font-size:11.5px;line-height:11.5px;">0.00 in</div>
<div class="t" style="left:761.80px;top:264.00px;font-size:11.5px;line-height:11.5px;">Max Stitch:</div>
<div class="t" style="left:846.30px;top:264.00px;font-size:11.5px;line-height:11.5px;">6.2 mm</div>
<div class="t" style="left:761.80px;top:280.00px;font-size:11.5px;line-height:11.5px;">Min Stitch:</div>
<div class="t" style="left:846.30px;top:280.00px;font-size:11.5px;line-height:11.5px;">0.3 mm</div>
<div class="t" style="left:761.80px;top:296.00px;font-size:11.5px;line-height:11.5px;">Max Jump:</div>
<div class="t" style="left:846.30px;top:296.00px;font-size:11.5px;line-height:11.5px;">6.5 mm</div>
<div class="t" style="left:761.80px;top:311.00px;font-size:11.5px;line-height:11.5px;">Total Bobbin:</div>
<div class="t" style="left:846.30px;top:311.00px;font-size:11.5px;line-height:11.5px;">42.73ft</div>
<div class="t" style="left:761.80px;top:327.00px;font-size:11.5px;line-height:11.5px;">Stop Sequence:</div>
<div class="t u" style="left:762.00px;top:343.00px;font-size:11.5px;line-height:11.5px;">#</div>
<div class="t u" style="left:777.50px;top:343.00px;font-size:11.5px;line-height:11.5px;">N#</div>
<div class="t u r" style="left:755.50px;width:80px;top:343.00px;font-size:11.5px;line-height:11.5px;">St.</div>
<div class="t u" style="left:840.80px;top:343.00px;font-size:11.5px;line-height:11.5px;">Description</div>
<div class="t u r" style="left:859.00px;width:80px;top:343.00px;font-size:11.5px;line-height:11.5px;">Code</div>
<div class="t u" style="left:944.80px;top:343.00px;font-size:11.5px;line-height:11.5px;">Brand</div>
<div class="t" style="left:762.00px;top:359.00px;font-size:11.5px;line-height:11.5px;">1.</div>
<div class="t" style="left:778.20px;top:359.00px;font-size:11.5px;line-height:11.5px;">1</div>
<div style="position:absolute;left:796px;top:357.90px;width:8.5px;height:7.5px;border:1px solid #7a7a7a;background:#e6d98e;"></div>
<div class="t r" style="left:755.50px;width:80px;top:359.00px;font-size:11.5px;line-height:11.5px;">118</div>
<div class="t" style="left:841.20px;top:359.00px;font-size:11.5px;line-height:11.5px;">Yellow</div>
<div class="t r" style="left:859.00px;width:80px;top:359.00px;font-size:11.5px;line-height:11.5px;">4</div>
<div class="t" style="left:945.20px;top:359.00px;font-size:11.5px;line-height:11.5px;">Wilcom</div>
<div class="t" style="left:762.00px;top:374.00px;font-size:11.5px;line-height:11.5px;">2.</div>
<div class="t" style="left:778.20px;top:374.00px;font-size:11.5px;line-height:11.5px;">2</div>
<div style="position:absolute;left:796px;top:373.70px;width:8.5px;height:7.5px;border:1px solid #7a7a7a;background:#ffffff;"></div>
<div class="t r" style="left:755.50px;width:80px;top:374.00px;font-size:11.5px;line-height:11.5px;">4568</div>
<div class="t" style="left:841.20px;top:374.00px;font-size:11.5px;line-height:11.5px;">White</div>
<div class="t r" style="left:859.00px;width:80px;top:374.00px;font-size:11.5px;line-height:11.5px;">15</div>
<div class="t" style="left:945.20px;top:374.00px;font-size:11.5px;line-height:11.5px;">Wilcom</div>
<div class="t" style="left:762.00px;top:390.00px;font-size:11.5px;line-height:11.5px;">3.</div>
<div class="t" style="left:778.20px;top:390.00px;font-size:11.5px;line-height:11.5px;">1</div>
<div style="position:absolute;left:796px;top:389.50px;width:8.5px;height:7.5px;border:1px solid #7a7a7a;background:#e6d98e;"></div>
<div class="t r" style="left:755.50px;width:80px;top:390.00px;font-size:11.5px;line-height:11.5px;">2756</div>
<div class="t" style="left:841.20px;top:390.00px;font-size:11.5px;line-height:11.5px;">Yellow</div>
<div class="t r" style="left:859.00px;width:80px;top:390.00px;font-size:11.5px;line-height:11.5px;">4</div>
<div class="t" style="left:945.20px;top:390.00px;font-size:11.5px;line-height:11.5px;">Wilcom</div>
<div class="t" style="left:762.00px;top:406.00px;font-size:11.5px;line-height:11.5px;">4.</div>
<div class="t" style="left:778.20px;top:406.00px;font-size:11.5px;line-height:11.5px;">2</div>
<div style="position:absolute;left:796px;top:405.30px;width:8.5px;height:7.5px;border:1px solid #7a7a7a;background:#ffffff;"></div>
<div class="t r" style="left:755.50px;width:80px;top:406.00px;font-size:11.5px;line-height:11.5px;">46</div>
<div class="t" style="left:841.20px;top:406.00px;font-size:11.5px;line-height:11.5px;">White</div>
<div class="t r" style="left:859.00px;width:80px;top:406.00px;font-size:11.5px;line-height:11.5px;">15</div>
<div class="t" style="left:945.20px;top:406.00px;font-size:11.5px;line-height:11.5px;">Wilcom</div>
<div class="t" style="left:7.20px;top:747.00px;font-size:11.5px;line-height:11.5px;">Created By:</div>
<div class="t" style="left:237.20px;top:747.00px;font-size:11.5px;line-height:11.5px;">Last Saved: 1/16/2026 2:53:27 PM</div>
<div class="t" style="left:581.60px;top:747.00px;font-size:11.5px;line-height:11.5px;">Printed: 1/16/2026 2:55:35 PM</div>
<div class="t r" style="left:902.50px;width:80px;top:747.00px;font-size:11.5px;line-height:11.5px;">Page 1 of 1</div>
</body></html>
